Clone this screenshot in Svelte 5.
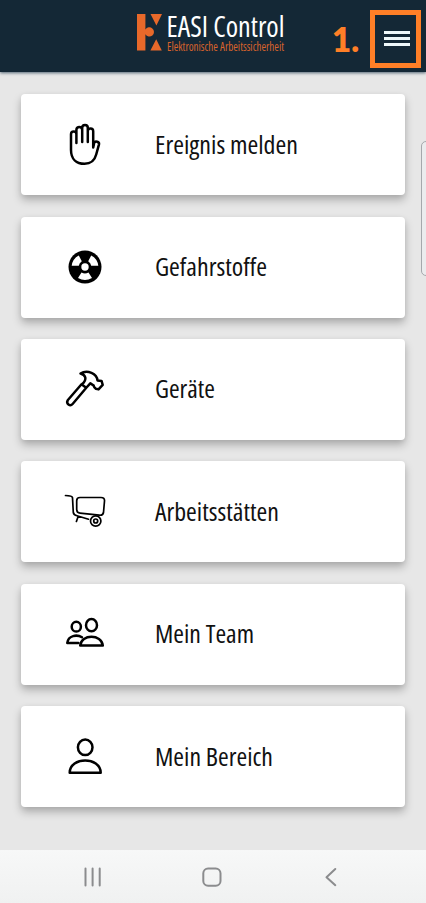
<script>
	const items = [
		{ icon: 'hand', label: 'Ereignis melden', width: 143 },
		{ icon: 'hazard', label: 'Gefahrstoffe', width: 112 },
		{ icon: 'hammer', label: 'Geräte', width: 60 },
		{ icon: 'barrow', label: 'Arbeitsstätten', width: 124 },
		{ icon: 'team', label: 'Mein Team', width: 99 },
		{ icon: 'person', label: 'Mein Bereich', width: 118 }
	];
</script>

<div class="screen">
	<header>
		<div class="logo">
			<svg class="mark" width="28" height="40" viewBox="0 0 28 40">
				<path d="M1 1h8.4v15.6a4.6 4.6 0 1 1 0 4.6V37.5H1z" />
				<path d="M14.5 1H26l-5.6 11.4zM20.2 26.2 25.8 37.5H14.4z" />
			</svg>
			<svg class="words" width="120" height="52" viewBox="0 0 120 52">
				<text class="brand" x="2.5" y="30.5" textLength="118" lengthAdjust="spacingAndGlyphs">EASI Control</text>
				<text class="claim" x="3" y="45" textLength="117" lengthAdjust="spacingAndGlyphs">Elektronische Arbeitssicherheit</text>
			</svg>
		</div>
		<span class="step">1.</span>
		<button class="menu" aria-label="Menü">
			<span></span>
			<span></span>
			<span></span>
		</button>
	</header>

	<main>
		{#each items as item (item.icon)}
			<button class="card">
				<svg class="icon" width="44" height="44" viewBox="0 0 44 44">
					{#if item.icon === 'hand'}
						<path d="M8 27V11.2a2.7 2.7 0 0 1 5.4 0V20M13.4 19V6.8a2.9 2.9 0 0 1 5.8 0V19M19.2 19V4.7a2.8 2.8 0 0 1 5.6 0V19M24.8 19V8.2a2.7 2.7 0 0 1 5.4 0V24.5L31.2 19.8C32 17.7 36.6 18.5 36 21.3L33.2 31.5C31.5 38 27.5 40.8 21.5 40.8 13.5 40.8 8 36 8 27" />
					{:else if item.icon === 'hazard'}
						<circle cx="22" cy="22" r="16.5" fill="#000" stroke="none" />
						<g fill="#fff" stroke="none">
							<path d="M18.8 16.2 15.8 10.4A13.3 13.3 0 0 0 8.7 20.7H15.8A6.5 6.5 0 0 1 18.8 16.2z" />
							<path d="M25.2 16.2 28.2 10.4A13.3 13.3 0 0 1 35.3 20.7H28.2A6.5 6.5 0 0 0 25.2 16.2z" />
							<path d="M18.5 27.5 15 33Q22 37 29 33L25.5 27.5Q22 29.5 18.5 27.5z" />
							<circle cx="22" cy="22" r="3.7" />
						</g>
					{:else if item.icon === 'hammer'}
						<path stroke-width="2.5" d="M22.5 20.2 18.5 17.3 4.7 33.3Q3.3 35.7 5.5 37.5 7.7 39.2 9.6 37L23.5 20.5 27.3 16.3 30.7 18.6Q31 20.7 33 21.8L35.5 22.4 39.7 17.8 38.6 14 34.5 13.5C34.2 9.5 31.5 7 28.5 5.8 25 4.4 20.5 4.6 17.5 6.5Q21.5 7.5 22.3 10.5 23 14.2 18.8 17.3" />
					{:else if item.icon === 'barrow'}
						<g stroke-width="1.7">
							<path d="M2.5 5.5Q9 5.5 9.5 7.7L10.3 22.5Q10.8 25 14 25.8L25.5 29.2M15.2 26.3 13.4 31.5" />
							<path d="M17 7.5H38Q41.8 7.5 41.5 11L40.5 22.5Q40 25.6 36.3 25.2L17 23.2Q13.7 22.8 13.7 19.5V10.7Q13.7 7.5 17 7.5z" />
							<circle cx="32.7" cy="31" r="5.2" />
							<circle cx="32.7" cy="31" r="2" />
						</g>
					{:else if item.icon === 'team'}
						<ellipse cx="28.5" cy="13.2" rx="5.5" ry="6.1" />
						<path d="M17.2 33.5C18.2 21.8 38.7 21.8 39.8 33.5z" />
						<ellipse cx="13.3" cy="14.7" rx="4.6" ry="4.9" />
						<path d="M15.4 31H4.3C5.2 23.3 14 22.2 19 25.3" />
					{:else}
						<ellipse cx="22.2" cy="12.3" rx="7.3" ry="7.8" />
						<path d="M6.7 37.7C7 21.5 37.3 21.5 37.7 37.7z" />
					{/if}
				</svg>
				<svg class="label" width={item.width + 2} height="38">
					<text x="0" y="28" textLength={item.width} lengthAdjust="spacingAndGlyphs">{item.label}</text>
				</svg>
			</button>
		{/each}
		<div class="edge-handle"></div>
	</main>

	<nav>
		<svg width="20" height="22" viewBox="0 0 20 22">
			<path d="M2.5 2.5v17M9.6 2.5v17M16.7 2.5v17" />
		</svg>
		<svg width="20" height="22" viewBox="0 0 20 22">
			<rect x="1.3" y="2.5" width="17.2" height="17.2" rx="4.8" />
		</svg>
		<svg width="20" height="22" viewBox="0 0 20 22">
			<path d="M14.3 3 5.5 11.2l8.800 8" />
		</svg>
	</nav>
</div>

<style>
	:global(body) {
		margin: 0;
	}

	.screen {
		display: flex;
		flex-direction: column;
		position: relative;
		height: 903px;
		overflow: hidden;
		background: #e7e7e7;
		font-family: 'Open Sans', 'Noto Sans', sans-serif;
	}

	button {
		border: 0;
		padding: 0;
		font: inherit;
	}

	header {
		display: flex;
		flex: none;
		box-sizing: border-box;
		height: 72px;
		padding: 0 5px 0 136px;
		background: #142836;
		box-shadow: 0 1px 3px #536675;
		z-index: 1;
	}

	.logo {
		display: flex;
		flex: none;
	}

	.mark {
		margin-top: 13px;
		fill: #e8692a;
	}

	.words {
		margin-top: 5.5px;
		overflow: visible;
	}

	.brand {
		font-size: 29px;
		font-weight: 500;
		font-stretch: 75%;
		fill: #fff;
	}

	.claim {
		font-size: 12px;
		font-weight: 500;
		font-stretch: 75%;
		fill: #d9632c;
	}

	.step {
		width: 38px;
		margin: 9px 0 0 48px;
		color: #ff7f27;
		font-family: Lato, 'Open Sans', sans-serif;
		font-size: 33px;
		font-weight: 800;
		line-height: 60px;
	}

	.menu {
		display: flex;
		flex: none;
		flex-direction: column;
		align-items: center;
		gap: 3px;
		box-sizing: border-box;
		width: 51px;
		height: 58px;
		margin-top: 10px;
		padding-top: 16px;
		border: 5px solid #ff7f27;
		background: transparent;
	}

	.menu span {
		width: 26px;
		height: 3px;
		margin-left: 2px;
		background: #eef8fa;
	}

	main {
		display: flex;
		flex: none;
		flex-direction: column;
		gap: 21.4px;
		position: relative;
		box-sizing: border-box;
		height: 778px;
		padding: 22.2px 21px 0;
	}

	.card {
		display: flex;
		flex: none;
		align-items: center;
		height: 101px;
		padding-left: 42px;
		border-radius: 4px;
		background: #fff;
		box-shadow: 0 5px 9px rgba(0, 0, 0, 0.25), 0 1px 5px rgba(0, 0, 0, 0.05);
	}

	.icon {
		fill: none;
		stroke: #000;
		stroke-width: 2.5;
		stroke-linecap: round;
		stroke-linejoin: round;
	}

	.label {
		margin-left: 48px;
		overflow: visible;
	}

	.label text {
		font-size: 26px;
		font-stretch: 75%;
		fill: #111;
	}

	.edge-handle {
		position: absolute;
		top: 69px;
		right: -8px;
		width: 11px;
		height: 133px;
		border: 1px solid #a5a8ac;
		border-radius: 5px;
		background: #ebecee;
	}

	nav {
		display: flex;
		flex: 1;
		justify-content: space-between;
		align-items: center;
		padding: 1px 85px 0 83px;
		background: linear-gradient(#f7f8f8, #f0f1f1);
	}

	nav svg {
		fill: none;
		stroke: #8b8c8e;
		stroke-width: 2;
		stroke-linecap: round;
		stroke-linejoin: round;
	}
</style>
